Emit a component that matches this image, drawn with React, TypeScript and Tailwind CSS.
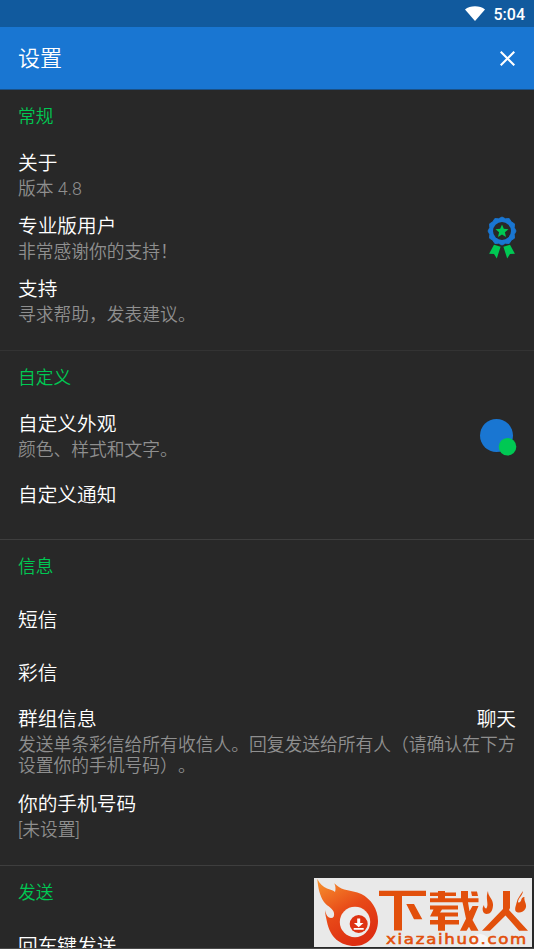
import type { ReactNode } from "react"

function Section({ title, children, divider = "border-b border-[#3e3e3e] pb-[17.3px]" } : { title: string, children: ReactNode, divider?: string }) {
    return (
        <section className={divider}>
            <h2 className="h-[53.3px] px-[18px] text-[17.7px] leading-[54px] font-[350] text-[#00c853]">{title}</h2>
            {children}
        </section>
    )
}

function Item({ title, text, value, icon } : { title: string, text?: string, value?: string, icon?: ReactNode }) {

    if (!text) {
        return <div className="h-[53.3px] px-[18px] text-[19.7px] leading-[55px] font-[350] text-white">{title}</div>
    }

    return (
        <div className="flex items-start justify-between px-[18px] pt-[5.5px] pb-[6.5px]">
            <div className="min-w-0 flex-1">
                <div className="flex justify-between text-[19.7px] leading-[30px] font-[350] text-white">
                    <span>{title}</span>
                    {value && <span>{value}</span>}
                </div>
                <p className="text-[17.78px] leading-[21.3px] font-[350] text-[#8f8f8f] [text-spacing-trim:space-all]">{text}</p>
            </div>
            {icon}
        </div>
    )
}

function BadgeIcon() {
    return (
        <svg className="mt-[3px] -mr-[1.7px] h-[45px] w-[32px]" viewBox="0 0 32 45">
            <path fill="#00c853" d="M8 29.800l6.600 2-3.800 11.700-2.800-4.500-4.900-.3zM24 29.800 17.400 31.800l3.800 11.700 2.800-4.500 4.900-.3z" />
            <path transform="translate(1.300 1.300) scale(.92)" fill="#1976d2" stroke="#1976d2" strokeWidth="1" strokeLinejoin="round" d="M16 .8l3.700 1.900 4.100-.2 2.200 3.500 3.500 2.200-.2 4.100 1.900 3.700-1.900 3.700.2 4.100-3.500 2.200-2.200 3.500-4.100-.2L16 31.200l-3.700-1.900-4.100.2L6 26l-3.500-2.200.2-4.100L.8 16l1.900-3.700-.2-4.100L6 6l2.200-3.500 4.100.2z" />
            <circle cx="16" cy="16" r="9" fill="#282828" />
            <path fill="#00c853" d="m16 9.500 1.800 4.300 4.700.4-3.600 3.100 1.100 4.600-4-2.500-4 2.500 1.100-4.600-3.600-3.100 4.700-.4z" />
        </svg>
    )
}

function ColorIcon() {
    return (
        <svg className="mt-[8px] -mr-[1px] h-[38px] w-[38px]" viewBox="0 0 38 38">
            <circle cx="17.500" cy="17.500" r="16.500" fill="#1976d2" />
            <circle cx="28.500" cy="28.800" r="8.800" fill="#00c853" />
        </svg>
    )
}

function Watermark() {
    return (
        <div className="absolute top-[878px] left-[314px] h-[69px] w-[218px] bg-[#e9e9e9]">
            <svg className="h-full w-full" viewBox="0 0 218 69">
                <defs>
                    <linearGradient id="flame" x1="0" y1="0" x2="0.500" y2="1">
                        <stop offset="0" stopColor="#f7942f" />
                        <stop offset="0.550" stopColor="#e84a18" />
                        <stop offset="1" stopColor="#de2f12" />
                    </linearGradient>
                </defs>
                <path fill="url(#flame)" d="M3.300 1C6 6 9 9 13 10.500c3 1.200 6 1.500 8 3.500 1-3 .5-6-.7-8.700 3 3 6 5 10 6.200 6 1.500 12 2 17 4.500C57 21 64 31 64 43c0 14-10 25-23 25-15 0-25-9-28-24-1-5-2-8-2-12 1 5 3 8 6 8 2.500 0 3.500-2 3-5-1-5-6-6-10-11C6 18 4 10 3.300 1z" />
                <circle cx="41" cy="44" r="15.200" fill="#ececec" />
                <circle cx="44.700" cy="46" r="9" fill="#de3212" />
                <path fill="#fff" d="M43.200 40.500h3v4.500h3.300l-4.800 4.300-4.800-4.300h3.300zM39.700 50h10v1.700h-10z" />
                <circle cx="166" cy="66" r="10" fill="#f6f6f6" />
                <g fill="#e2500c">
                    <path d="M65 12.700h47V18H88v34.500h-8V18H65zM92.300 26h7.700l8.300 15.300H100z" />
                    <path d="M116 14.500h8V13h7v1.500h11V18h-11v2.300h16V13h7v7.300h10.500v4H154l1.500 9 3-5.300h6l-6 14 6 10.700h-7.500l-2-4-2.500 4h-6.500l6-12-3.500-16.400H116v-4h8V18h-8zM157 13.500h6l1 4.500h-6z" />
                    <path d="M116 27.500h28v4h-16l-2 3h18v4h-13v3.500h14v4.500h-14v6.200h-7v-6.200h-8V42h8v-3.500h-8l3.500-7H116z" />
                    <path d="M189 13h7v17l-1 2 19 20.700h-9L191.500 37.500 176 52.700h-8L189 31z" />
                    <path d="M174 13c0 6 5.500 8 5 14.500-.3 5-2.500 8.500-6.500 8.500-4 0-5-6-2.500-9 0 2 1 3.500 2.300 3.500 3-4-1.300-10 1.700-17.500zM209 13c-.5 5-4.500 6.500-5 11 1 1.500 3 0 3.500-3 .5-1.500 2-2 3-2-1 5 3 7 1 11.500-2 4-7.500 5.500-10 2.500-1-3 .5-5 1-8 1-5 4-8 6.500-12z" />
                </g>
                <text x="72" y="65.500" textLength="142" lengthAdjust="spacingAndGlyphs" letterSpacing="1.500" fill="#e2500c" stroke="#e2500c" strokeWidth="0.600" fontFamily="DejaVu Sans, sans-serif" fontSize="14.500">xiazaihuo.com</text>
            </svg>
        </div>
    )
}

export default function App() {
    return (
        <div lang="zh-CN" className="relative h-[949px] w-full overflow-hidden bg-[#282828] font-['Roboto','Noto_Sans_CJK_SC',sans-serif]">
            <div className="flex h-[27px] items-center justify-end gap-[9px] bg-[#115a9e] pr-[9px] text-white">
                <svg className="h-[15px] w-[20px]" viewBox="0 0 20 15" fill="#fff">
                    <path d="M10 15 0 3.500C5-.8 15-.8 20 3.500z" />
                </svg>
                <span className="pt-[2px] text-[16px] leading-none font-medium">5:04</span>
            </div>
            <header className="flex h-[63px] items-center justify-between border-b border-[#1a5187] bg-[#1976d2] pr-[19px] pl-[18px] text-white">
                <h1 className="pt-[2px] text-[22px] leading-[30px] font-[350]">设置</h1>
                <svg className="h-[15px] w-[15px]" viewBox="0 0 15 15" stroke="#fff" strokeWidth="2.100">
                    <path d="m.7.7 13.600 13.600M14.300.7.7 14.300" />
                </svg>
            </header>

            <Section title="常规" divider="border-b border-[#333333] pb-[17.3px]">
                <Item title="关于" text="版本 4.8" />
                <Item title="专业版用户" text="非常感谢你的支持！" icon={<BadgeIcon />} />
                <Item title="支持" text="寻求帮助，发表建议。" />
            </Section>
            <Section title="自定义">
                <Item title="自定义外观" text="颜色、样式和文字。" icon={<ColorIcon />} />
                <Item title="自定义通知" />
            </Section>
            <Section title="信息">
                <Item title="短信" />
                <Item title="彩信" />
                <Item title="群组信息" value="聊天" text="发送单条彩信给所有收信人。回复发送给所有人（请确认在下方设置你的手机号码）。" />
                <Item title="你的手机号码" text="[未设置]" />
            </Section>
            <Section title="发送" divider="">
                <Item title="回车键发送" />
            </Section>

            <div className="absolute bottom-0 left-0 h-px w-full bg-[#484848]" />
            <Watermark />
        </div>
    )
}
